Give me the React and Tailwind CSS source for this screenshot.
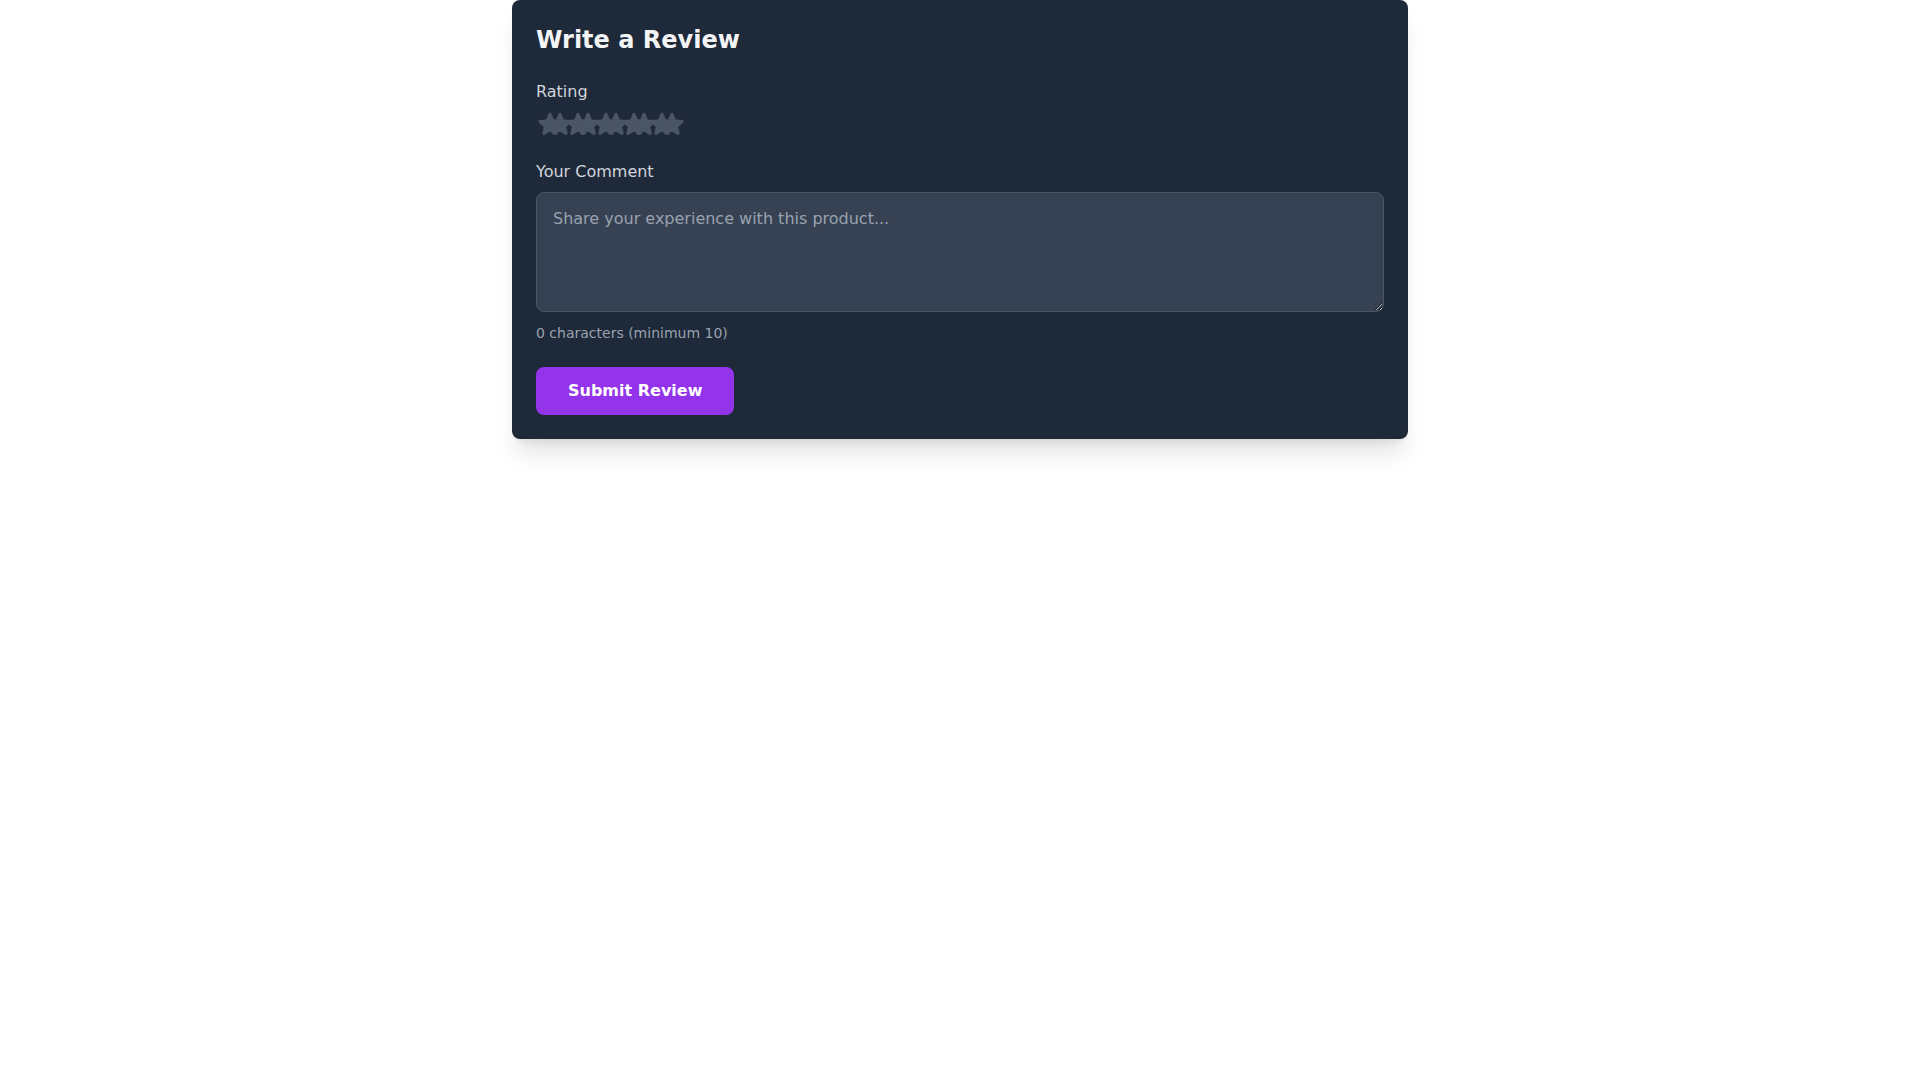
import { useState } from "react";

// heroicons solid star
function StarIcon({ className }) {
  return (
    <svg viewBox="0 0 24 24" fill="currentColor" className={className}>
      <path
        fillRule="evenodd"
        d="M10.788 3.21c.448-1.077 1.976-1.077 2.424 0l2.082 5.006 5.404.434c1.164.093 1.636 1.545.749 2.305l-4.117 3.527 1.257 5.273c.271 1.136-.964 2.033-1.96 1.425L12 18.354 7.373 21.18c-.996.608-2.231-.29-1.96-1.425l1.257-5.273-4.117-3.527c-.887-.76-.415-2.212.749-2.305l5.404-.434 2.082-5.005Z"
        clipRule="evenodd"
      />
    </svg>
  );
}

export default function App() {
  const [rating, setRating] = useState(0);
  const [hover, setHover] = useState(0);
  const [comment, setComment] = useState("");

  return (
    <div className="min-h-screen bg-white font-['DejaVu_Sans',sans-serif]">
      <div className="max-w-4xl mx-auto bg-gray-800 rounded-lg shadow-xl p-6">
        <h2 className="text-2xl font-bold text-gray-100 mb-6">Write a Review</h2>

        {/* Rating */}
        <div className="mb-[22px]">
          <label className="block text-gray-300 mb-1.5">Rating</label>
          <div className="flex">
            {[1, 2, 3, 4, 5].map((star) => {
              const color = star <= (hover || rating) ? "text-yellow-400" : "text-gray-600";
              return (
                <button
                  key={star}
                  type="button"
                  className={`relative w-7 h-7 ${color}`}
                  onClick={() => setRating(star)}
                  onMouseEnter={() => setHover(star)}
                  onMouseLeave={() => setHover(0)}
                >
                  <StarIcon className="w-7 h-7" />
                  <StarIcon className="absolute top-0 left-2.5 w-7 h-7" />
                </button>
              );
            })}
          </div>
        </div>

        {/* Comment */}
        <div className="mb-6">
          <label className="block text-gray-300 mb-2">Your Comment</label>
          <textarea
            value={comment}
            onChange={(e) => setComment(e.target.value)}
            placeholder="Share your experience with this product..."
            className="block w-full h-30 px-4 py-3.5 bg-gray-700 border border-gray-600 rounded-lg text-gray-100 placeholder-gray-400 focus:outline-none"
          />
          <p className="text-sm text-gray-400 mt-[11px]">
            {comment.length} characters (minimum 10)
          </p>
        </div>

        <button
          type="button"
          className="px-8 py-3 bg-[#9333ea] text-white font-bold rounded-lg"
        >
          Submit Review
        </button>
      </div>
    </div>
  );
}
